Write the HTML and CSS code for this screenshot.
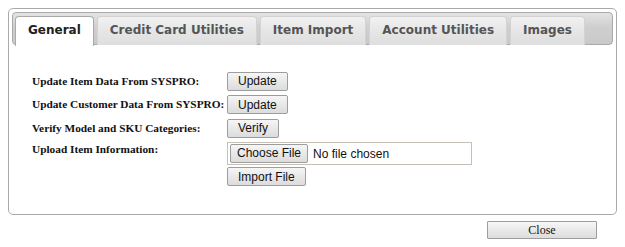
FILE: index.html
```html
<!DOCTYPE html>
<html lang="en">
<head>
    <meta charset="UTF-8">
    <title>Utilities</title>
    <link rel="stylesheet" href="styles.css">
</head>
<body>
    <div class="tabs">
        <ul class="tab-nav">
            <li class="tab active">General</li>
            <li class="tab">Credit Card Utilities</li>
            <li class="tab">Item Import</li>
            <li class="tab">Account Utilities</li>
            <li class="tab">Images</li>
        </ul>

        <div class="tab-panel">
            <table class="util-table">
                <tr>
                    <td class="label">Update Item Data From SYSPRO:</td>
                    <td><button class="btn">Update</button></td>
                </tr>
                <tr>
                    <td class="label">Update Customer Data From SYSPRO:</td>
                    <td><button class="btn">Update</button></td>
                </tr>
                <tr>
                    <td class="label">Verify Model and SKU Categories:</td>
                    <td><button class="btn">Verify</button></td>
                </tr>
                <tr>
                    <td class="label top">Upload Item Information:</td>
                    <td>
                        <div class="file-box"><input type="file" class="file-input"></div>
                        <button class="btn">Import File</button>
                    </td>
                </tr>
            </table>
        </div>
    </div>

    <div class="footer">
        <button class="close-btn">Close</button>
    </div>
</body>
</html>
```

FILE: styles.css
```css
body {
    margin: 8px;
    font-family: "Liberation Sans", Arial, sans-serif;
    background: #fff;
}

.tabs {
    border: 1px solid #aaaaaa;
    border-radius: 5px;
    padding: 3px;
    height: 199px;
}

.tab-nav {
    list-style: none;
    margin: 0;
    padding: 3px 2px 0;
    display: flex;
    gap: 3px;
    border: 1px solid #aaaaaa;
    border-radius: 4px;
    background: linear-gradient(#e4e4e4, #cfcfcf 45%, #c9c9c9);
    height: 28px;
}

.tab {
    font-family: "DejaVu Sans", Verdana, sans-serif;
    font-weight: bold;
    font-size: 12px;
    color: #555555;
    padding: 6px 12px 0;
    height: 22px;
    border: 1px solid #d3d3d3;
    border-bottom: 0;
    border-radius: 4px 4px 0 0;
    background: linear-gradient(#f1f1f1, #e6e6e6 50%, #dedede);
}

.tab.active {
    color: #212121;
    background: #fff;
    border-color: #aaaaaa;
    height: 23px;
}

.tab-panel {
    padding: 24px 0 0 20px;
}

.util-table {
    border-collapse: collapse;
}

.util-table td {
    padding: 2px 0;
    vertical-align: middle;
}

.label {
    font-family: "Liberation Serif", "Times New Roman", serif;
    font-weight: bold;
    font-size: 11.3px;
    color: #111;
    width: 195px;
    white-space: nowrap;
}

.label.top {
    vertical-align: top !important;
    padding-top: 3px !important;
}

.btn,
.file-input::file-selector-button {
    font-family: "Liberation Sans", Arial, sans-serif;
    font-size: 12px;
    color: #111;
    height: 19px;
    padding: 0 10px;
    border: 1px solid #9d9d9d;
    border-radius: 2px;
    background: linear-gradient(#f6f6f6, #e8e8e8 50%, #dcdcdc);
}

.file-box {
    width: 241px;
    height: 21px;
    border: 1px solid #c6c0b6;
    display: flex;
    align-items: center;
    padding-left: 2px;
    margin-bottom: 2px;
}

.file-input {
    font-family: "Liberation Sans", Arial, sans-serif;
    font-size: 12px;
    color: #111;
}

.file-input::file-selector-button {
    padding: 0 6px;
    margin-right: 5px;
}

.footer {
    display: flex;
    justify-content: flex-end;
    padding: 6px 20px 0 0;
}

.close-btn {
    width: 110px;
    height: 18px;
    font-family: "Liberation Serif", "Times New Roman", serif;
    font-size: 12px;
    color: #111;
    border: 1px solid #9d9d9d;
    border-radius: 1px;
    background: linear-gradient(#f7f7f7, #e9e9e9 50%, #dddddd);
}
```
